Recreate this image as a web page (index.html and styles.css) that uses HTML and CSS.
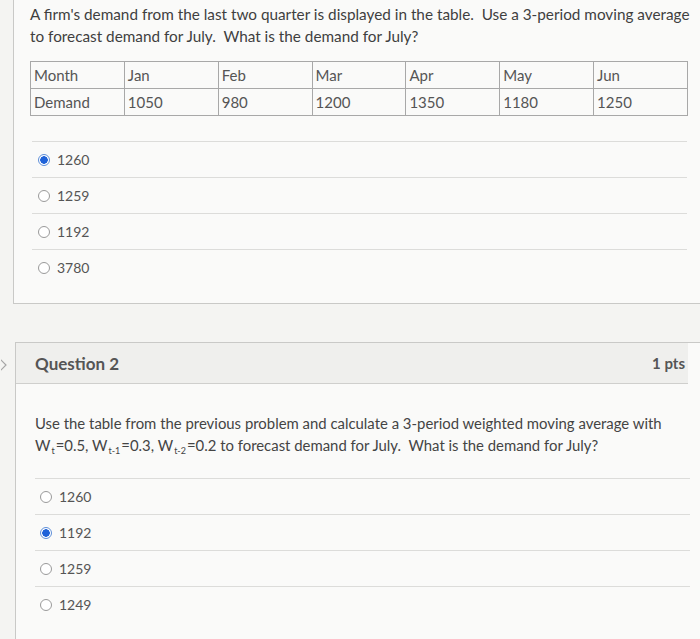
FILE: index.html
```html
<!DOCTYPE html>
<html>
<head>
<meta charset="utf-8">
<link rel="stylesheet" href="styles.css">
</head>
<body>
<div class="page">
  <section class="card q1">
    <p class="qtext">A firm's demand from the last two quarter is displayed in the table.&nbsp; Use a 3-period moving average to forecast demand for July.&nbsp; What is the demand for July?</p>
    <table class="demand">
      <tr><td>Month</td><td>Jan</td><td>Feb</td><td>Mar</td><td>Apr</td><td>May</td><td>Jun</td></tr>
      <tr><td>Demand</td><td>1050</td><td>980</td><td>1200</td><td>1350</td><td>1180</td><td>1250</td></tr>
    </table>
    <ul class="answers">
      <li><span class="radio checked"></span>1260</li>
      <li><span class="radio"></span>1259</li>
      <li><span class="radio"></span>1192</li>
      <li><span class="radio"></span>3780</li>
    </ul>
  </section>

  <section class="card q2">
    <svg class="chev" width="10" height="20" viewBox="0 0 10 20"><path d="M-2 3 L5 10 L-2 17" fill="none" stroke="#a5a5a5" stroke-width="1.2"/></svg>
    <header class="qhead"><span class="qtitle">Question 2</span><span class="pts">1 pts</span></header>
    <div class="qbody">
      <p class="qtext2"><span class="line">Use the table from the previous problem and calculate a 3-period weighted moving average with</span><span class="line">W<sub>t</sub>=0.5, W<sub>t-1</sub>=0.3, W<sub>t-2</sub>=0.2 to forecast demand for July.&nbsp; What is the demand for July?</span></p>
      <ul class="answers a2">
        <li><span class="radio"></span>1260</li>
        <li><span class="radio checked"></span>1192</li>
        <li><span class="radio"></span>1259</li>
        <li><span class="radio"></span>1249</li>
      </ul>
    </div>
  </section>
</div>
</body>
</html>
```
FILE: styles.css
```css
html, body {
  margin: 0;
  padding: 0;
  background: #f4f4f2;
  overflow: hidden;
}
body {
  font-family: Lato, "Open Sans", sans-serif;
  color: #4a4a4a;
  width: 700px;
  height: 639px;
}
.page {
  position: relative;
}
.card {
  background: #fafaf9;
  border: 1px solid #c9c9c7;
  border-right: none;
  width: 720px;
  box-sizing: border-box;
}
.q1 {
  margin-left: 13px;
  border-top: none;
  padding: 3px 0 18px 16px;
}
.qtext {
  margin: 0;
  font-size: 15.3px;
  line-height: 22px;
  width: 662px;
  color: #3f3f3f;
}
.demand {
  border-collapse: collapse;
  margin-top: 14px;
  width: 658px;
  table-layout: fixed;
}
.demand td {
  border: 1.5px solid #a8a8a8;
  height: 26px;
  padding: 0 3px;
  font-size: 15px;
  color: #555;
  vertical-align: middle;
}
.answers {
  list-style: none;
  margin: 25px 0 0 2px;
  padding: 0;
  width: 655px;
}
.answers li {
  height: 36px;
  border-top: 1px solid #dcdcda;
  box-sizing: border-box;
  display: flex;
  align-items: center;
  padding-left: 6px;
  font-size: 14px;
  color: #555;
}
.radio {
  width: 10px;
  height: 10px;
  border: 1px solid #9a9a9a;
  border-radius: 50%;
  margin-right: 7px;
  background: #fff;
  flex: none;
}
.radio.checked {
  border-color: #5f8fd8;
  background: radial-gradient(circle, #1f62d8 0 3.5px, #fff 4px);
}
.q2 {
  margin-top: 38px;
  margin-left: 15px;
  position: relative;
}
.chev {
  position: absolute;
  left: -15px;
  top: 12px;
}
.qhead {
  height: 41px;
  background: #efefed;
  border-bottom: 1px solid #cfcfcd;
  display: flex;
  align-items: center;
  justify-content: space-between;
  padding: 0 3px 0 19px;
  width: 672px;
  box-sizing: border-box;
}
.qtitle {
  font-size: 17px;
  font-weight: bold;
  color: #555;
}
.pts {
  font-size: 15px;
  font-weight: bold;
  color: #555;
}
.qbody {
  padding: 28px 0 40px 19px;
}
.qtext2 {
  margin: 0;
  font-size: 14.9px;
  line-height: 22px;
  width: 645px;
  color: #444;
}
.qtext2 .line {
  display: block;
  white-space: nowrap;
}
.qtext2 sub {
  font-size: 9px;
  vertical-align: -3px;
  line-height: 0;
  margin: 0 1px;
}
.a2 {
  margin-top: 22px;
  margin-left: 0;
}
.a2 li {
  height: 36px;
  padding-left: 5px;
}
```
